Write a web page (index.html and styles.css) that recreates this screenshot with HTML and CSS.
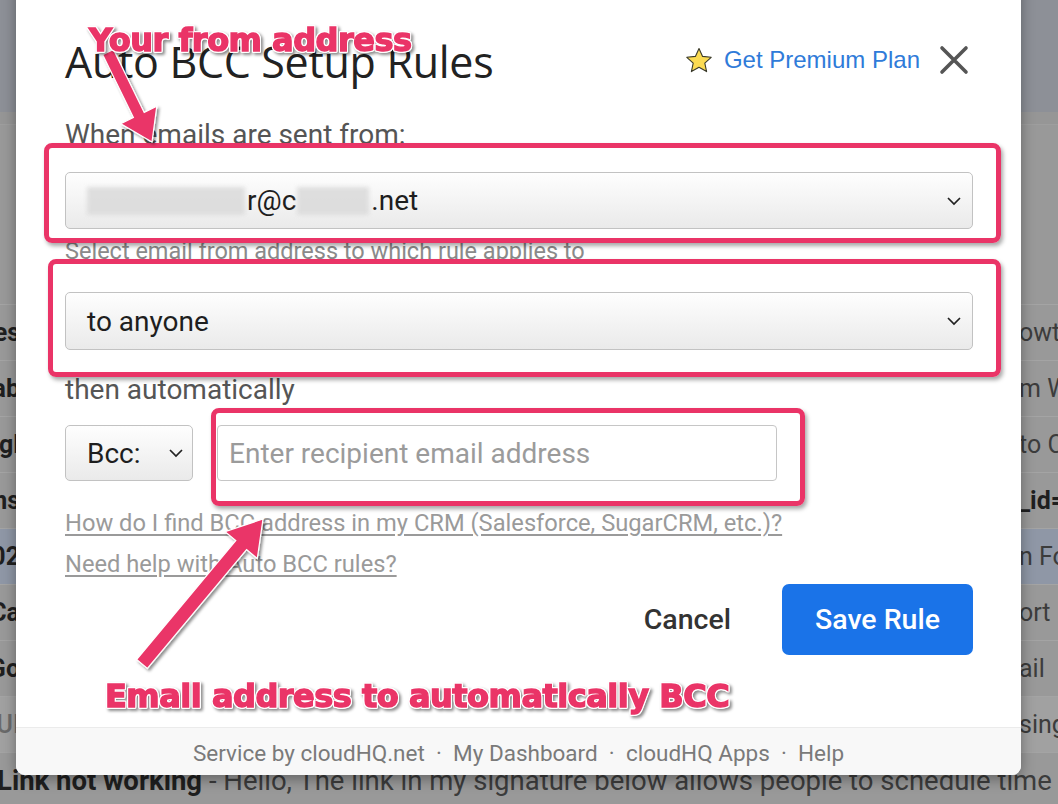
FILE: index.html
```html
<!DOCTYPE html>
<html lang="en">
<head>
<meta charset="utf-8">
<title>Auto BCC Setup Rules</title>
<link rel="stylesheet" href="styles.css">
</head>
<body>
<div class="page">
  <div class="bg">
    <div class="bg-top"></div>
    <div class="bg-band"></div>
    <div class="bg-gap"></div>
    <div class="rows">
      <div class="row"><span class="l b">Votes</span><span class="r">owto Gmail</span></div>
      <div class="row"><span class="l b">Lab</span><span class="r">m Work</span></div>
      <div class="row"><span class="l b">Engl</span><span class="r">to Cal</span></div>
      <div class="row"><span class="l b">Ins</span><span class="r b">_id=</span></div>
      <div class="row sel"><span class="l b">202</span><span class="r">n Form</span></div>
      <div class="row"><span class="l b">Ca</span><span class="r">ort</span></div>
      <div class="row"><span class="l b">Go</span><span class="r">ail</span></div>
      <div class="row light"><span class="l lt">UI</span><span class="r">sing</span></div>
      <div class="row full"><span class="b">Link not working</span>&nbsp;- Hello, The link in my signature below allows people to schedule time</div>
    </div>
  </div>

  <div class="dialog">
    <div class="body">
      <div class="header">
        <h1 class="title">Auto BCC Setup Rules</h1>
        <div class="header-right">
          <svg class="star" viewBox="0 0 28 26" width="28" height="26">
            <polygon points="14,1.5 17.6,9.4 26.2,10.3 19.8,16.1 21.6,24.6 14,20.2 6.4,24.6 8.2,16.1 1.8,10.3 10.4,9.4" fill="#fbdb52" stroke="#3a3a2a" stroke-width="1.1" stroke-linejoin="round"/>
          </svg>
          <a class="premium">Get Premium Plan</a>
          <svg class="close" viewBox="0 0 30 30" width="30" height="30">
            <path d="M3 3 L27 27 M27 3 L3 27" stroke="#555" stroke-width="3.6" stroke-linecap="round"/>
          </svg>
        </div>
      </div>

      <div class="label">When emails are sent from:</div>
      <div class="select">
        <span class="value"><span class="blur blur-a"></span>r@c<span class="blur blur-b"></span>.net</span>
        <svg class="chev" viewBox="0 0 16 10" width="16" height="10"><polyline points="2,2 8,8 14,2" fill="none" stroke="#222" stroke-width="1.7"/></svg>
      </div>
      <div class="help">Select email from address to which rule applies to</div>
      <div class="select second">
        <span class="value">to anyone</span>
        <svg class="chev" viewBox="0 0 16 10" width="16" height="10"><polyline points="2,2 8,8 14,2" fill="none" stroke="#222" stroke-width="1.7"/></svg>
      </div>
      <div class="then">then automatically</div>
      <div class="bcc-row">
        <div class="select bcc">
          <span class="value">Bcc:</span>
          <svg class="chev" viewBox="0 0 16 10" width="16" height="10"><polyline points="2,2 8,8 14,2" fill="none" stroke="#222" stroke-width="1.7"/></svg>
        </div>
        <div class="input">Enter recipient email address</div>
      </div>
      <div class="links">
        <a class="link">How do I find BCC address in my CRM (Salesforce, SugarCRM, etc.)?</a>
        <a class="link">Need help with Auto BCC rules?</a>
      </div>
      <div class="actions">
        <button class="cancel">Cancel</button>
        <button class="save">Save Rule</button>
      </div>
    </div>
    <div class="footer">Service by cloudHQ.net &nbsp;·&nbsp; My Dashboard &nbsp;·&nbsp; cloudHQ Apps &nbsp;·&nbsp; Help</div>
  </div>

  <div class="anno-box box1"></div>
  <div class="anno-box box2"></div>
  <div class="anno-box box3"></div>

  <svg class="arrows" width="1058" height="804" viewBox="0 0 1058 804">
    <defs>
      <filter id="sh" x="-20%" y="-20%" width="140%" height="140%">
        <feDropShadow dx="2" dy="2" stdDeviation="1.6" flood-color="#000" flood-opacity="0.45"/>
      </filter>
    </defs>
    <polygon filter="url(#sh)" points="102.6,54.6 113.4,49.4 144.2,112.4 156.8,106.2 152,142 120.8,123.8 133.4,117.6" fill="#ea3467" stroke="#fff" stroke-width="1.2" stroke-linejoin="miter"/>
    <polygon filter="url(#sh)" points="136.6,659.5 235.8,540.6 225.1,531.7 263,519 257.3,558.5 246.6,549.6 147.4,668.5" fill="#ea3467" stroke="#fff" stroke-width="1.2" stroke-linejoin="miter"/>
  </svg>

  <div class="anno-text t1">Your from address</div>
  <div class="anno-text t2">Email address to automatically BCC</div>
</div>
</body>
</html>
```

FILE: styles.css
```css
* { box-sizing: border-box; }
html, body { margin: 0; padding: 0; }
body { font-family: Roboto, "Liberation Sans", Arial, sans-serif; background: #979797; }

.page {
  position: relative;
  width: 1058px;
  height: 804px;
  overflow: hidden;
  background: #989898;
}

/* background mail list (dimmed) */
.bg { width: 100%; }
.bg-top { height: 112px; background: #8d9097; }
.bg-band { height: 13px; background: #969696; border-bottom: 1px solid #9e9e9e; }
.bg-gap { height: 179px; background: #999999; }
.rows { display: flex; flex-direction: column; }
.row {
  height: 56px;
  display: flex;
  align-items: center;
  justify-content: space-between;
  border-top: 1px solid #a4a4a4;
  background: #999999;
  font-size: 25px;
  color: #3c3c3c;
  white-space: nowrap;
}
.row.sel { background: #8f97a6; }
.row.light { background: #a1a1a1; }
.row .l {
  width: 20px;
  overflow: hidden;
  display: flex;
  justify-content: flex-end;
}
.row .r {
  width: 39px;
  overflow: hidden;
  white-space: nowrap;
}
.row .b { font-weight: 700; color: #1f1f1f; }
.row .lt { color: #6a6a6a; font-weight: 500; }
.row.full {
  justify-content: flex-start;
  margin-left: -3px;
  align-items: flex-start;
  padding-top: 13px;
  line-height: 30px;
  font-size: 27.5px;
  overflow: hidden;
}

/* dialog */
.dialog {
  position: absolute;
  left: 16px;
  top: -20px;
  width: 1005px;
  height: 795px;
  background: #fff;
  border-radius: 9px;
  box-shadow: 0 4px 14px rgba(0,0,0,0.35);
  display: flex;
  flex-direction: column;
  overflow: hidden;
}
.body {
  padding: 58px 48px 0 49px;
  display: flex;
  flex-direction: column;
}
.header {
  display: flex;
  align-items: center;
  justify-content: space-between;
  height: 48px;
}
.title {
  margin: 0;
  font-family: "Open Sans", Roboto, sans-serif;
  font-weight: 400;
  font-size: 43px;
  line-height: 48px;
  color: #222;
  letter-spacing: -0.3px;
}
.header-right {
  display: flex;
  align-items: center;
  margin-right: 4px;
  margin-top: -4px;
}
.star { margin-right: 11px; }
.premium {
  font-family: "Liberation Sans", Arial, sans-serif;
  font-size: 24px;
  color: #2f7bd9;
  margin-right: 19px;
}
.close { display: block; }

.label {
  margin-top: 35px;
  font-size: 28px;
  line-height: 28px;
  color: #555;
}
.select {
  margin-top: 23px;
  height: 57px;
  border: 1px solid #c2c2c2;
  border-radius: 5px;
  background: linear-gradient(#fefefe, #eaeaea);
  display: flex;
  align-items: center;
  justify-content: space-between;
  padding: 0 10px 0 21px;
  font-size: 28px;
  color: #1e1e1e;
}
.select .value { display: flex; align-items: center; }
.blur {
  display: inline-block;
  height: 28px;
  background: #dadada;
  filter: blur(2px);
  opacity: 0.85;
}
.blur-a { width: 158px; margin-right: 2px; }
.blur-b { width: 72px; margin: 0 2px 0 1px; }
.chev { display: block; }

.help {
  margin-top: 10px;
  font-size: 23.5px;
  line-height: 24px;
  color: #8a8a8a;
}
.select.second { margin-top: 29px; height: 58px; }
.then {
  margin-top: 25px;
  font-size: 28px;
  line-height: 30px;
  color: #555;
}
.bcc-row {
  margin-top: 20px;
  display: flex;
  gap: 24px;
}
.select.bcc {
  margin-top: 0;
  width: 128px;
  height: 56px;
  padding-right: 8px;
}
.input {
  width: 560px;
  height: 56px;
  border: 1.5px solid #c6c6c6;
  border-radius: 4px;
  display: flex;
  align-items: center;
  padding-left: 11px;
  font-size: 28px;
  color: #9b9b9b;
}
.links {
  margin-top: 29px;
  display: flex;
  flex-direction: column;
  gap: 15px;
  align-items: flex-start;
}
.link {
  font-size: 23.7px;
  line-height: 26px;
  color: #9a9a9a;
  text-decoration: underline;
  text-underline-offset: 3px;
}
.actions {
  margin-top: 7px;
  display: flex;
  justify-content: flex-end;
  align-items: center;
  gap: 27px;
}
.cancel {
  font-family: Roboto, sans-serif;
  font-size: 28.5px;
  font-weight: 500;
  color: #333;
  background: none;
  border: 0;
  padding: 0 24px;
  height: 71px;
}
.save {
  font-family: Roboto, sans-serif;
  font-size: 28.5px;
  font-weight: 500;
  color: #fff;
  background: #1a73e8;
  border: 0;
  border-radius: 7px;
  width: 191px;
  height: 71px;
}
.footer {
  margin-top: auto;
  background: #f8f8f8;
  border-top: 1px solid #ebebeb;
  text-align: center;
  font-size: 22.5px;
  line-height: 26px;
  color: #7a7a7a;
  padding: 12px 0 9px;
}

/* annotations */
.anno-box {
  position: absolute;
  border: 5px solid #ea3467;
  border-radius: 8px;
  box-shadow: 2px 3px 4px rgba(0,0,0,0.35), inset 1px 1px 0 rgba(255,255,255,0.6);
}
.box1 { left: 44px; top: 143px; width: 957px; height: 100px; }
.box2 { left: 48px; top: 259px; width: 953px; height: 118px; }
.box3 { left: 211px; top: 408px; width: 594px; height: 98px; }

.arrows { position: absolute; left: 0; top: 0; pointer-events: none; }

.anno-text {
  position: absolute;
  font-family: "DejaVu Sans", Verdana, sans-serif;
  font-weight: 700;
  font-size: 32px;
  line-height: 38px;
  color: #ea3467;
  -webkit-text-stroke: 1.4px #ea3467;
  paint-order: stroke fill;
  filter: drop-shadow(1px 0 0 #fff) drop-shadow(-1px 0 0 #fff) drop-shadow(0 1px 0 #fff) drop-shadow(0 -1px 0 #fff) drop-shadow(2px 2px 1.5px rgba(0,0,0,0.45));
  white-space: nowrap;
  letter-spacing: -0.5px;
}
.t1 { left: 89px; top: 21px; }
.t2 { left: 105px; top: 677px; }
```
